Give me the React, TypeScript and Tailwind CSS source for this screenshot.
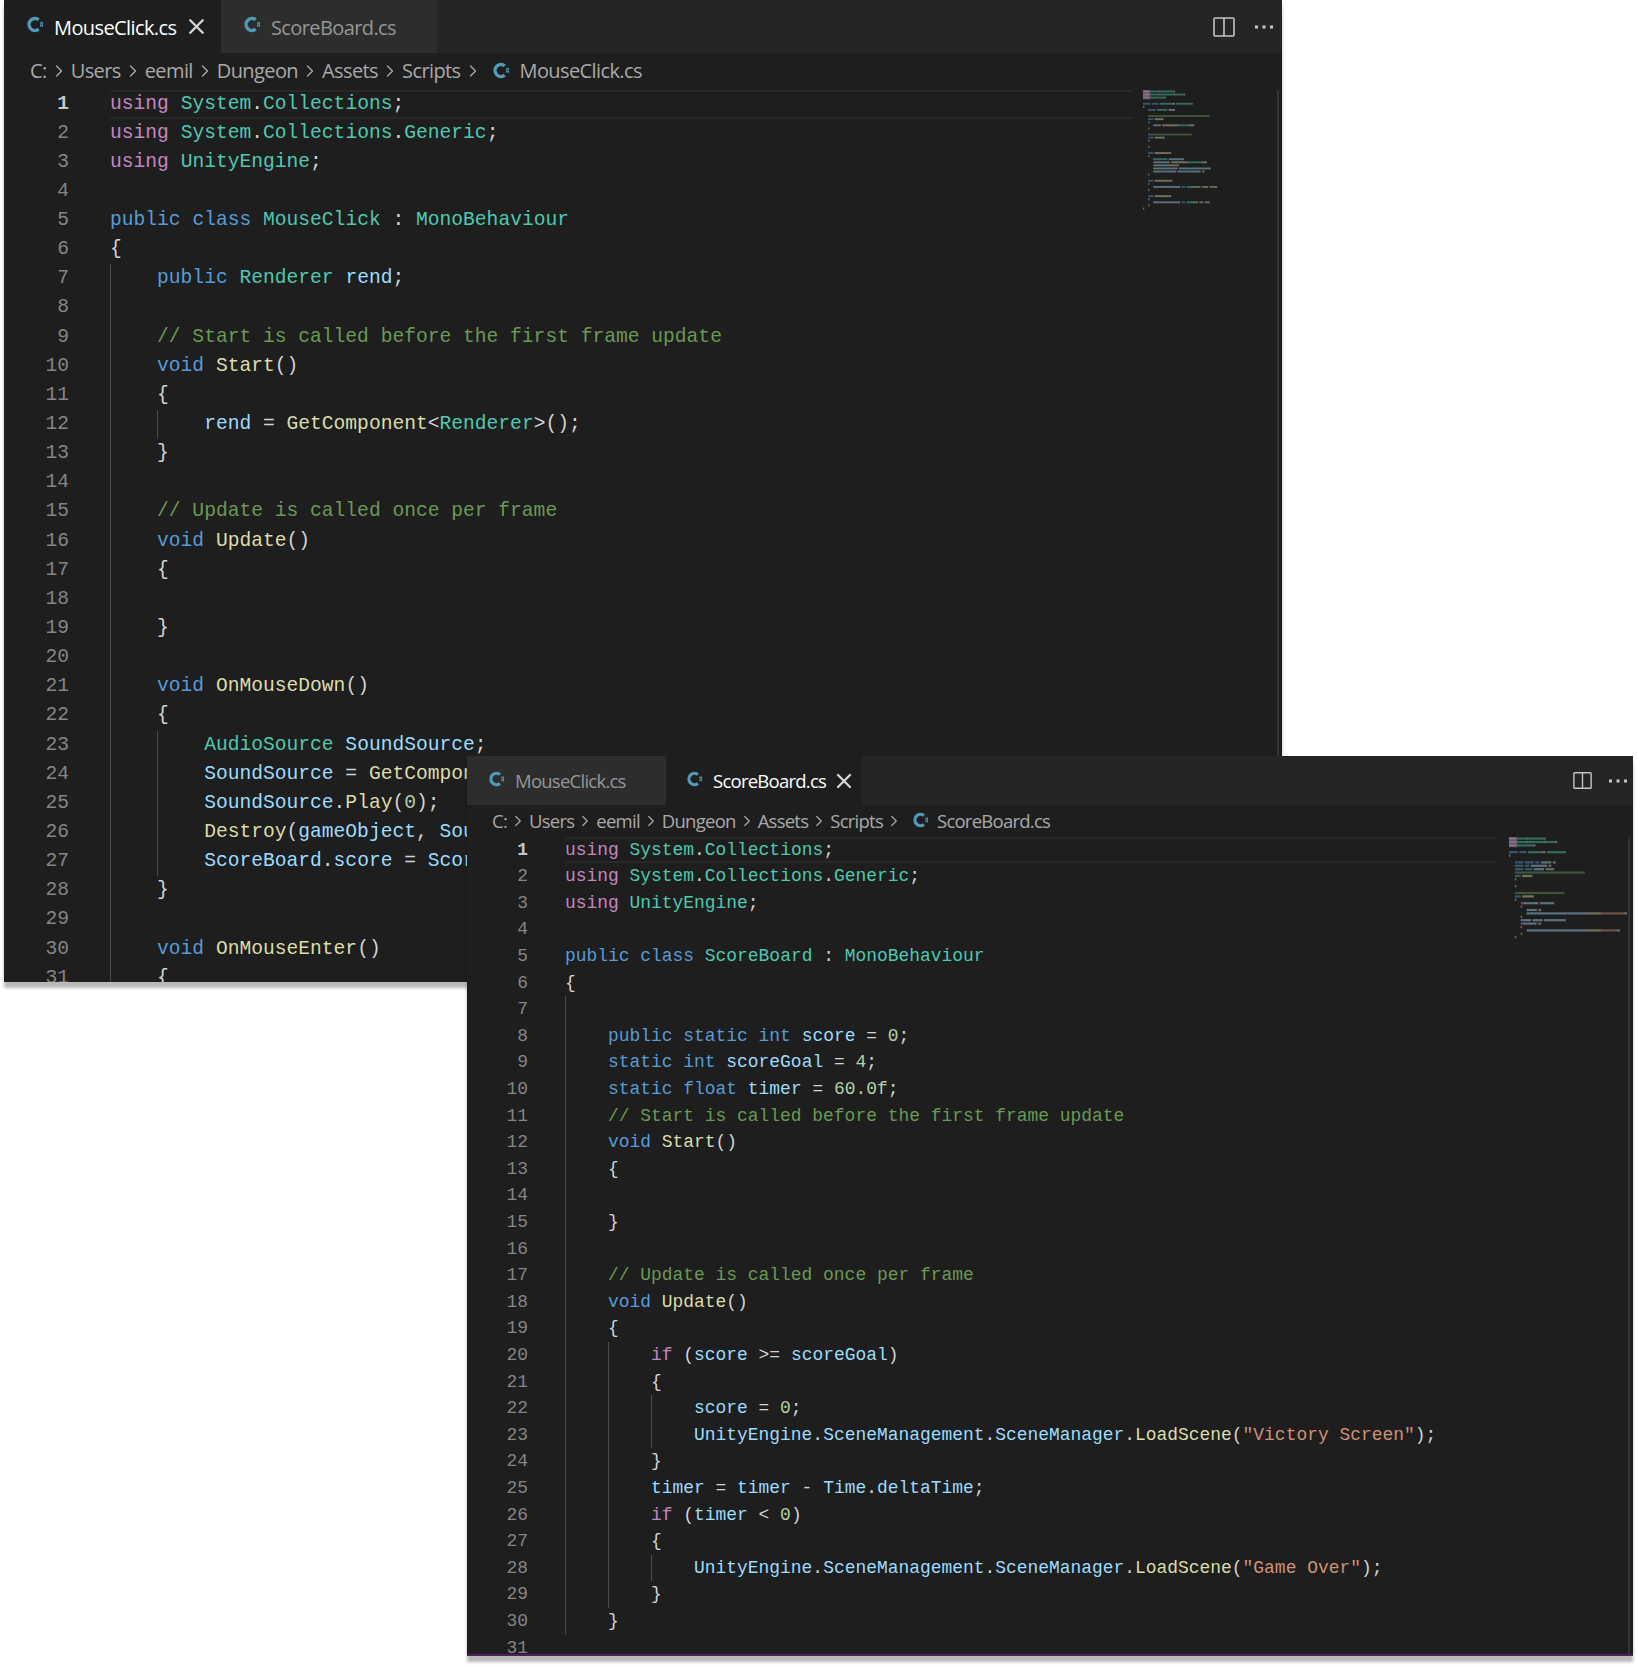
import { ChevronRight, X } from "lucide-react";

// token markup: [k text] = coloured span, anything else is default foreground
const textColor: Record<string, string> = {
  c: "text-[#c586c0]",
  k: "text-[#569cd6]",
  t: "text-[#4ec9b0]",
  v: "text-[#9cdcfe]",
  f: "text-[#dcdcaa]",
  m: "text-[#6a9955]",
  s: "text-[#ce9178]",
  n: "text-[#b5cea8]",
  d: "text-[#d4d4d4]",
};

const fillColor: Record<string, string> = {
  c: "#c586c0",
  k: "#569cd6",
  t: "#4ec9b0",
  v: "#9cdcfe",
  f: "#dcdcaa",
  m: "#6a9955",
  s: "#ce9178",
  n: "#b5cea8",
  d: "#d4d4d4",
};

const mouseClick = [
  "[c using] [t System].[t Collections];",
  "[c using] [t System].[t Collections].[t Generic];",
  "[c using] [t UnityEngine];",
  "",
  "[k public] [k class] [t MouseClick] : [t MonoBehaviour]",
  "{",
  "    [k public] [t Renderer] [v rend];",
  "    ",
  "    [m // Start is called before the first frame update]",
  "    [k void] [f Start]()",
  "    {",
  "        [v rend] = [f GetComponent]<[t Renderer]>();",
  "    }",
  "    ",
  "    [m // Update is called once per frame]",
  "    [k void] [f Update]()",
  "    {",
  "    ",
  "    }",
  "    ",
  "    [k void] [f OnMouseDown]()",
  "    {",
  "        [t AudioSource] [v SoundSource];",
  "        [v SoundSource] = [f GetComponent]<[t AudioSource]>();",
  "        [v SoundSource].[f Play]([n 0]);",
  "        [f Destroy]([v gameObject], [v SoundSource].[v clip].[v length]);",
  "        [v ScoreBoard].[v score] = [v ScoreBoard].[v score] + [n 1];",
  "    }",
  "    ",
  "    [k void] [f OnMouseEnter]()",
  "    {",
  "        [v rend].[v material].[v color] = [k new] [t Color]([n 0.8f], [n 0.8f], [n 0.8f]);",
  "    }",
  "    ",
  "    [k void] [f OnMouseExit]()",
  "    {",
  "        [v rend].[v material].[v color] = [k new] [t Color]([n 1f], [n 1f], [n 1f]);",
  "    }",
  "}",
];

const scoreBoard = [
  "[c using] [t System].[t Collections];",
  "[c using] [t System].[t Collections].[t Generic];",
  "[c using] [t UnityEngine];",
  "",
  "[k public] [k class] [t ScoreBoard] : [t MonoBehaviour]",
  "{",
  "    ",
  "    [k public] [k static] [k int] [v score] = [n 0];",
  "    [k static] [k int] [v scoreGoal] = [n 4];",
  "    [k static] [k float] [v timer] = [n 60.0f];",
  "    [m // Start is called before the first frame update]",
  "    [k void] [f Start]()",
  "    {",
  "    ",
  "    }",
  "    ",
  "    [m // Update is called once per frame]",
  "    [k void] [f Update]()",
  "    {",
  "        [c if] ([v score] >= [v scoreGoal])",
  "        {",
  "            [v score] = [n 0];",
  '            [v UnityEngine].[v SceneManagement].[v SceneManager].[f LoadScene]([s "Victory Screen"]);',
  "        }",
  "        [v timer] = [v timer] - [v Time].[v deltaTime];",
  "        [c if] ([v timer] < [n 0])",
  "        {",
  '            [v UnityEngine].[v SceneManagement].[v SceneManager].[f LoadScene]([s "Game Over"]);',
  "        }",
  "    }",
  "",
];

function parseLine(line: string) {
  const indent = line.length - line.trimStart().length;
  const body = line.trimStart();
  const parts: { tag: string; text: string }[] = [];
  const re = /\[(\w) ([^\]]*)\]/g;
  let last = 0;
  let m: RegExpExecArray | null;
  while ((m = re.exec(body))) {
    if (m.index > last) parts.push({ tag: "d", text: body.slice(last, m.index) });
    parts.push({ tag: m[1], text: m[2] });
    last = m.index + m[0].length;
  }
  if (last < body.length) parts.push({ tag: "d", text: body.slice(last) });
  return { indent, parts };
}

function CsIcon({ className }: { className: string }) {
  return (
    <svg viewBox="0 0 16 16" className={className} fill="none">
      <path d="M11 3.6A5.6 5.6 0 1 0 11 12.4" stroke="#519aba" strokeWidth="3.2" />
      <path d="M12.2 6.6h3M12.2 9h3M13 5.4v5M14.5 5.4v5" stroke="#519aba" strokeWidth="0.8" />
    </svg>
  );
}

function SplitIcon({ className }: { className: string }) {
  return (
    <svg viewBox="0 0 22 20" className={className} fill="none" stroke="#c5c5c5" strokeWidth="1.6">
      <rect x="1" y="1" width="20" height="18" rx="1" />
      <path d="M11 1v18" />
    </svg>
  );
}

function DotsIcon({ className }: { className: string }) {
  return (
    <svg viewBox="0 0 18 4" className={className} fill="#c5c5c5">
      <rect x="0" y="0.5" width="3" height="3" />
      <rect x="7.5" y="0.5" width="3" height="3" />
      <rect x="15" y="0.5" width="3" height="3" />
    </svg>
  );
}

function Minimap({ lines, charW, lineH, className }: { lines: string[]; charW: number; lineH: number; className: string }) {
  return (
    <svg className={className} fill="none">
      <rect x="0" y="0" width={charW * 6} height={lineH * 3} fill="#5a5a5a" />
      {lines.flatMap((line, i) => {
        const { indent, parts } = parseLine(line);
        let col = indent;
        return parts.map((p, j) => {
          const x = col * charW;
          col += p.text.length;
          return (
            <rect
              key={`${i}-${j}`}
              x={x}
              y={i * lineH + 0.5}
              width={p.text.trimEnd().length * charW}
              height={lineH - 1.2}
              fill={fillColor[p.tag]}
              opacity={0.45}
            />
          );
        });
      })}
    </svg>
  );
}

type Skin = {
  frame: string;
  tabBar: string;
  iconBox: string;
  tabText: string;
  crumbs: string;
  crumbIcon: string;
  chevron: string;
  code: string;
  row: string;
  gutter: string;
  cell: string;
  split: string;
  dots: string;
  actions: string;
  minimap: string;
  charW: number;
  lineH: number;
  scrollbar: string;
};

function Tab({ name, active, width, pad, close, skin }: { name: string; active?: boolean; width: string; pad: string; close: string; skin: Skin }) {
  return (
    <div className={`flex items-center h-full ${width} ${pad} ${active ? "bg-[#1e1e1e] text-white" : "bg-[#2d2d2d] text-[#969696]"}`}>
      <CsIcon className={skin.iconBox} />
      <span className={skin.tabText}>{name}</span>
      {active && <X className={`${close} shrink-0 text-[#d4d4d4]`} strokeWidth={2.3} />}
    </div>
  );
}

function Editor({ tabs, file, lines, skin }: { tabs: React.ReactNode; file: string; lines: string[]; skin: Skin }) {
  const crumbs = ["C:", "Users", "eemil", "Dungeon", "Assets", "Scripts"];
  return (
    <div className={`absolute flex flex-col overflow-hidden bg-[#1e1e1e] ${skin.frame}`}>
      <div className={`flex items-center shrink-0 bg-[#252526] ${skin.tabBar}`}>
        {tabs}
        <div className={`ml-auto flex items-center ${skin.actions}`}>
          <SplitIcon className={skin.split} />
          <DotsIcon className={skin.dots} />
        </div>
      </div>
      <div className={`flex items-center shrink-0 text-[#a9a9a9] font-['Open_Sans',sans-serif] ${skin.crumbs}`}>
        {crumbs.map((c) => (
          <span key={c} className="flex items-center">
            {c}
            <ChevronRight className={skin.chevron} strokeWidth={1.6} />
          </span>
        ))}
        <CsIcon className={skin.crumbIcon} />
        <span>{file}</span>
      </div>
      <div className={`relative flex-1 overflow-hidden font-['Liberation_Mono',monospace] whitespace-pre ${skin.code}`}>
        {lines.map((line, i) => {
          const { indent, parts } = parseLine(line);
          const guides = Math.floor(indent / 4);
          return (
            <div key={i} className={`flex ${skin.row}`}>
              <div className={`text-right ${skin.gutter} ${i === 0 ? "text-[#c6c6c6] font-bold" : "text-[#858585]"}`}>{i + 1}</div>
              <div className={`flex ${skin.cell} ${i === 0 ? "shadow-[inset_0_2px_0_#282828,inset_0_-2px_0_#282828]" : ""}`}>
                {Array.from({ length: guides }, (_, g) => (
                  <span key={g} className="w-[4ch] shrink-0 border-l border-[#4a4a4a]" />
                ))}
                <span>
                  {parts.map((p, j) => (
                    <span key={j} className={textColor[p.tag]}>
                      {p.text}
                    </span>
                  ))}
                </span>
              </div>
            </div>
          );
        })}
        <Minimap lines={lines} charW={skin.charW} lineH={skin.lineH} className={skin.minimap} />
        <div className={`absolute top-0 bottom-0 border-l-2 border-[#333333] ${skin.scrollbar}`} />
      </div>
    </div>
  );
}

const backSkin: Skin = {
  frame: "left-[4px] top-0 w-[1278px] h-[982px] shadow-[0_6px_3px_rgba(0,0,0,0.28)]",
  tabBar: "h-[53px]",
  iconBox: "size-[17px] mb-[4px] mr-[10px] shrink-0",
  tabText: "mt-[2px] font-['Open_Sans',sans-serif] text-[20px] tracking-[-0.6px]",
  crumbs: "h-[36.5px] pl-[26px] text-[20px] tracking-[-0.6px]",
  crumbIcon: "size-[17px] ml-[8px] mr-[10px] mb-[2px]",
  chevron: "size-[20px] mx-[2px]",
  code: "text-[19.63px]",
  row: "h-[29.15px] leading-[29.15px]",
  gutter: "w-[65px] mr-[41px] shrink-0",
  cell: "w-[1023px] shrink-0",
  split: "w-[22px] h-[20px]",
  dots: "w-[18px] h-[4px] ml-[20px]",
  actions: "pr-[9px]",
  minimap: "absolute left-[1139px] top-0 w-[126px] h-[125px] blur-[0.5px]",
  charW: 1.28,
  lineH: 3.08,
  scrollbar: "right-[3px]",
};

const frontSkin: Skin = {
  frame: "left-[467px] top-[756px] w-[1166px] h-[900px] shadow-[0_6px_3px_rgba(0,0,0,0.28)] border-b-2 border-[#4d1f5c]",
  tabBar: "h-[49px]",
  iconBox: "size-[16px] mb-[3px] mr-[10px] shrink-0",
  tabText: "font-['Open_Sans',sans-serif] text-[18.5px] tracking-[-0.75px]",
  crumbs: "h-[31.7px] pl-[25px] text-[18.5px] tracking-[-0.75px]",
  crumbIcon: "size-[16px] ml-[8px] mr-[8px] mb-[2px]",
  chevron: "size-[18px] mx-[2px]",
  code: "text-[17.93px]",
  row: "h-[26.6px] leading-[26.6px]",
  gutter: "w-[61px] mr-[37px] shrink-0",
  cell: "w-[932px] shrink-0",
  split: "w-[19px] h-[19px]",
  dots: "w-[18px] h-[4px] ml-[17px]",
  actions: "pr-[6px]",
  minimap: "absolute left-[1042px] top-0 w-[118px] h-[110px] blur-[0.5px]",
  charW: 1.46,
  lineH: 3.4,
  scrollbar: "right-[3px]",
};

export default function App() {
  return (
    <div className="relative w-[1637px] h-[1668px] bg-white overflow-hidden">
      <Editor
        skin={backSkin}
        file="MouseClick.cs"
        lines={mouseClick}
        tabs={
          <>
            <Tab skin={backSkin} name="MouseClick.cs" active width="w-[217px]" pad="pl-[23px]" close="size-[25px] ml-[8px]" />
            <Tab skin={backSkin} name="ScoreBoard.cs" width="w-[216px]" pad="pl-[23px]" close="" />
          </>
        }
      />
      <Editor
        skin={frontSkin}
        file="ScoreBoard.cs"
        lines={scoreBoard}
        tabs={
          <>
            <Tab skin={frontSkin} name="MouseClick.cs" width="w-[199px]" pad="pl-[22px]" close="" />
            <Tab skin={frontSkin} name="ScoreBoard.cs" active width="w-[196px]" pad="pl-[21px]" close="size-[24px] ml-[6px]" />
          </>
        }
      />
    </div>
  );
}
